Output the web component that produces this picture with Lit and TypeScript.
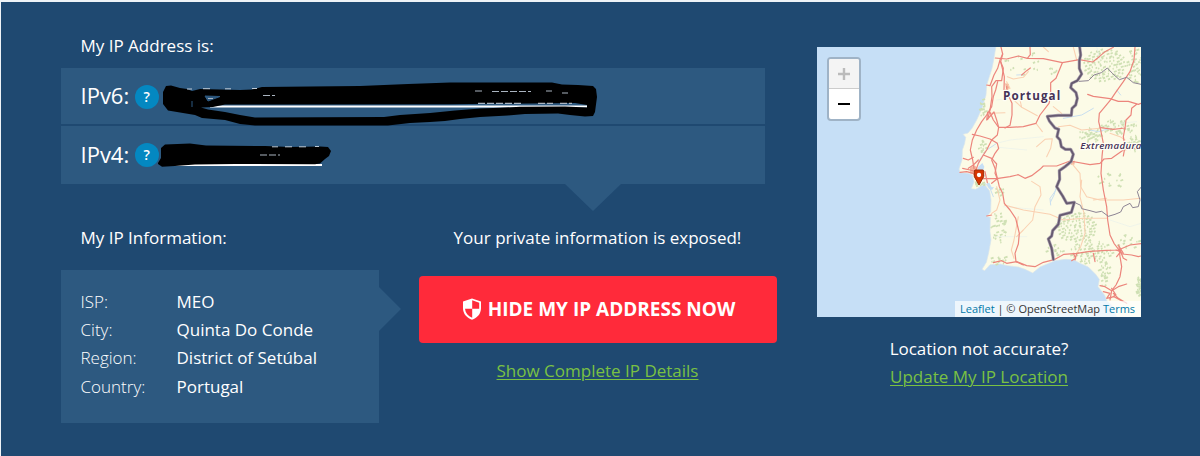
import { LitElement, html, css, svg } from "lit";
import { customElement } from "lit/decorators.js";

const MAJOR_ROADS = [
  "M573 21 L578 42 L572 65 L577 85 L583 110 L582 150",
  "M556 54 L590 57 L625 48 L652 55 L700 56 L757 68 L808 59 L848 66 L868 50 L885 35 L910 22",
  "M660 21 L661 44 L652 55",
  "M578 42 L570 60 L563 85 L552 105 L540 137 L530 135",
  "M572 65 L580 85 L575 122 L558 122 L545 140 L546 170 L540 210 L533 238",
  "M563 125 L557 150 L550 170 L545 200 L530 225 L515 245 L500 270 L487 300 L481 330 L488 360 L492 385",
  "M757 68 L746 95 L738 115 L722 128 L722 170 L717 190 L690 225 L678 250 L640 260 L600 262 L566 262 L550 240 L540 217",
  "M590 140 L592 160 L606 190 L606 225 L600 256 L585 264",
  "M533 217 L530 240 L552 216 L560 240 L566 262 L562 285 L545 300 L530 330 L520 345 L505 370 L498 390",
  "M487 283 L510 288 L540 297 L562 310 L566 325 L555 340 L545 360 L555 385 L562 415 L568 440 L578 460 L583 490 L600 510 L617 535 L622 555 L628 580 L625 612 L615 640 L618 665 L640 675",
  "M520 345 L545 355 L560 372 L555 400 L562 416",
  "M460 355 L475 360 L490 352 M458 385 L480 390 L500 395 L510 405 L520 416 L560 416 L600 410 L625 404 L645 415 L665 407 L690 388 L700 378 L740 378 L780 363 L840 374 L870 370 L882 357 L905 355 L940 330 L975 325 L992 318",
  "M450 397 L470 395 L490 400 L500 420 M475 385 L490 375 L505 360 M525 395 L532 428 M562 416 L545 430",
  "M975 21 L972 60 L960 95 L940 125 L915 160 L903 178 L885 200 L868 220 L866 245 L872 270 L880 310 L876 350 L873 400 L880 450 L890 500 L893 540 L900 585 L912 610 L927 630",
  "M833 163 L850 169 L900 176 L925 184 L955 184 L985 193 L993 190",
  "M872 263 L910 268 L945 264 L948 240 L963 225 L965 205 L980 193",
  "M945 264 L940 290 L945 320 L940 348",
  "M550 668 L575 662 L590 670 L620 665 L650 677 L675 680 L700 667 L735 658 L762 643 L800 640 L840 634 L890 631 L925 630 L960 615 L993 611",
  "M925 630 L937 642 L965 645 L985 650 L993 648 M927 620 L930 650 L935 680 L930 710 L918 735 L905 752 L900 780",
  "M930 630 L940 655 L950 660 M918 630 L932 635 L920 650 M925 615 L940 640",
  "M870 737 L885 740 L905 752 L925 740 L950 732 M880 755 L900 760 L890 775 L912 770 L940 785 M905 745 L918 765 L900 775 M910 760 L925 775 L950 790",
  "M790 640 L797 655 L785 662 M800 640 L795 660 M850 640 L855 665",
  "M530 528 L545 525 M635 105 L650 92 L661 84",
];

const MINOR_ROADS = [
  "M592 110 L610 117 L640 112 L655 95 M590 125 L600 145 L580 150",
  "M606 175 L635 202 L660 215 L682 227 M635 202 L630 180 M678 250 L697 275",
  "M680 320 L705 298 L727 296 L722 325 L710 350 M540 220 L585 218",
  "M730 200 L755 220 M665 424 L690 440 L693 465 L675 500 L668 540 L640 570 L620 590",
  "M583 495 L640 510 L720 523 L760 540 L820 535 L890 535",
  "M790 21 L800 60 M700 21 L715 35",
  "M745 260 L780 256 L815 270 L870 265 M785 370 L810 400 L812 440 L830 470 L870 480 L940 480 L992 475",
  "M815 420 L810 470 L822 520 L825 580 L812 620 L800 640",
  "M900 280 L930 290 L945 300 M850 480 L890 475 M560 440 L570 480 L560 510 L545 520",
  "M625 530 L612 600 L604 630 L612 655",
];

const RIVERS = [
  "M722 485 L732 465 L738 445 M738 450 L720 475 L722 495 M760 235 L815 225 L850 205",
  "M505 365 L530 330 L560 310 M525 430 L540 445 L550 470",
  "M840 270 L865 275 L900 265 M920 150 L932 165 M620 105 L640 104",
];

/** Faint streams that barely show over the land. */
const STREAMS = [
  "M560 310 L600 300 L700 290 M580 500 L640 505 L700 510 M545 320 L650 330 M560 180 L700 160",
  "M860 20 L870 60 M930 250 L980 245 M560 590 L650 590 M900 540 L960 560 L993 550",
];

/** Patches of woodland as [x, y, spread x, spread y, number of tufts]. */
const WOODS: number[][] = [
  [880, 75, 65, 50, 105], [970, 75, 24, 55, 36], [515, 205, 9, 28, 16],
  [840, 285, 38, 24, 30], [920, 260, 58, 22, 42], [795, 560, 62, 45, 90],
  [840, 635, 65, 36, 65], [565, 560, 24, 48, 30], [565, 455, 15, 15, 10],
  [515, 320, 13, 20, 12], [725, 90, 12, 12, 5], [900, 420, 45, 24, 14],
  [985, 740, 10, 30, 28], [880, 690, 18, 25, 17], [505, 431, 15, 7, 10],
  [730, 630, 28, 18, 15], [565, 660, 30, 14, 12], [950, 605, 35, 22, 14],
  [640, 70, 60, 34, 14], [970, 310, 22, 26, 25], [880, 720, 12, 20, 8],
];

/** Low-discrepancy scatter, so the woodland keeps the same shape on every render. */
function tufts(): string {
  let d = "";
  let n = 1;
  for (const [cx, cy, rx, ry, count] of WOODS) {
    for (let i = 0; i < count; i++, n++) {
      const a = ((n * 0.5698403) % 1) * Math.PI * 2;
      const r = Math.sqrt((n * 0.7548777) % 1);
      const x = cx + Math.cos(a) * r * rx;
      const y = cy + Math.sin(a) * r * ry;
      const w = 3 + (n % 4) * 1.8;
      d += `M${x.toFixed(1)} ${y.toFixed(1)}l${w} -3l2 5l-${w} 3z`;
    }
  }
  return d;
}

@customElement("ip-map")
export class IpMap extends LitElement {
  static styles = css`
    :host {
      display: grid;
      width: 324px;
      height: 270px;
      overflow: hidden;
      position: relative;
      background: #c6dff6;
      text-align: left;
    }
    .tiles { display: block; width: 324px; height: 270px; }
    .sea { fill: #c6dff6; }
    .land { fill: #fcfbe7; stroke: #d9e6ec; stroke-width: 2; }
    .woods { fill: #cfe0b4; }
    .city { fill: #f4b79d; }
    .line { fill: none; stroke-linejoin: round; stroke-linecap: round; }
    .river { stroke: #c9dff0; stroke-width: 3; }
    .stream { stroke: #edf3ea; stroke-width: 2.5; }
    .minor { stroke: #fad1b2; stroke-width: 3.2; }
    .major { stroke: #ec857c; stroke-width: 3.6; }
    .region { stroke: #8d8494; stroke-width: 3; }
    .border-halo { stroke: #aaa0ae; stroke-width: 9.5; }
    .border { stroke: #665a70; stroke-width: 5.5; }
    .label {
      font-family: "Open Sans", sans-serif;
      font-weight: 700;
      fill: #453257;
      stroke: #fffef5;
      stroke-width: 7;
      stroke-linejoin: round;
      paint-order: stroke;
    }
    .country { font-size: 35px; letter-spacing: 3.2px; }
    .area { font-size: 29px; font-style: italic; font-weight: 600; letter-spacing: 1px; }
    .pin { fill: #d63400; stroke: #9e2c07; stroke-width: 3; }
    .eye { fill: #fff; }
    .zoom {
      position: absolute;
      left: 10px;
      top: 10px;
      width: 30px;
      border: 2px solid #9fb3c6;
      border-radius: 4px;
      background: #fff;
      overflow: hidden;
    }
    .step { display: grid; place-items: center; box-sizing: border-box; height: 30px; }
    .step.off { background: #f4f4f4; border-bottom: 1px solid #ccc; }
    .step svg { display: block; }
    .credit {
      position: absolute;
      right: 0;
      bottom: 0;
      box-sizing: border-box;
      width: 186px;
      height: 16px;
      padding-left: 5px;
      background: rgba(255, 255, 255, 0.7);
      color: #333;
      font: 11px/16px "Open Sans", sans-serif;
      white-space: nowrap;
    }
    .credit a { color: #0078a8; }
  `;

  render() {
    const paths = (list: string[], cls: string) =>
      list.map((d) => svg`<path class="line ${cls}" d=${d} />`);
    const frontier =
      "M809 21 L812 45 L808 62 L808 85 L815 102 L802 122 L785 130 L782 143 L798 158 L802 175 L797 195 L786 205 L784 226 L745 226 L712 229 L718 243 L735 264 L746 268 L741 290 L750 300 L754 320 L766 328 L782 328 L790 343 L783 365 L765 380 L748 392 L749 418 L740 440 L758 468 L770 490 L793 487 L784 517 L750 526 L745 553 L728 572 L725 588 L715 597 L725 625 L730 658";
    return html`
      <svg class="tiles" viewBox="21 21 972 810">
        <rect class="sea" x="21" y="21" width="972" height="810" />
        <path class="land" d="M558 18 L550 65 L546 85 L530 135 L528 165 L516 205 L500 240 L486 265 L474 279 L459 283 L467 292 L464 310 L457 330 L456 360 L447 387 L450 398 L475 400 L487 405 L492 425 L484 446 L497 448 L523 433 L539 453 L543 480 L542 515 L530 530 L541 532 L540 575 L543 600 L536 638 L529 667 L516 688 L524 692 L540 674 L570 672 L592 677 L625 681 L645 688 L668 699 L690 681 L735 662 L765 658 L790 659 L810 670 L835 681 L857 703 L868 718 L864 740 L884 766 L891 784 L905 795 L920 831 L996 834 L996 18 Z" />
        <path class="woods" d=${tufts()} />
        <path class="sea" d="M500 398 L505 380 L517 369 L523 380 L518 397 L526 408 L513 407 Z M530 430 L538 428 L545 442 L552 441 L546 450 L536 445 Z" />
        <path class="city" d="M480 383 l14 -7 l8 8 l-4 22 l-18 -6 z M585 130 l12 2 l0 15 l-8 4 z M782 364 l13 -2 l-2 12 l-10 0 z" />
        ${paths(STREAMS, "stream")} ${paths(RIVERS, "river")}
        ${paths(MINOR_ROADS, "minor")} ${paths(MAJOR_ROADS, "major")}
        <path class="line region" d="M808 124 L835 122 L852 105 L874 98 L892 84 L908 101 L928 119 L950 112 L970 128 L993 133" />
        <path class="line region" d="M793 487 L812 496 L815 506 L840 512 L858 517 L875 514 L895 529 L915 523 L932 516 L940 500 L960 490 L968 503 L985 500 L990 480 L982 455 L993 442" />
        <path class="line border-halo" d=${frontier} />
        <path class="line border" d=${frontier} />
        <text class="label country" x="579" y="179">Portugal</text>
        <text class="label area" x="811" y="328">Extremadura</text>
        <path class="pin" d="M493 393 Q493 390 496 390 H518 Q521 390 521 393 V410 L507 435 L493 410 Z" />
        <circle class="eye" cx="507" cy="405" r="6.5" />
      </svg>
      <div class="zoom">
        <div class="step off">
          <svg width="14" height="14"><path d="M7 1V13M1 7H13" stroke="#bbb" stroke-width="2.4" /></svg>
        </div>
        <div class="step">
          <svg width="14" height="14"><path d="M1 7H13" stroke="#000" stroke-width="2" /></svg>
        </div>
      </div>
      <div class="credit"><a>Leaflet</a> | © OpenStreetMap <a>Terms</a></div>
    `;
  }
}

@customElement("app-root")
export class AppRoot extends LitElement {
  static styles = css`
    :host {
      display: block;
      box-sizing: border-box;
      height: 456px;
      padding: 2px 0 0 1px;
      background: #eef3f7;
      color: #fff;
      font: 17px/28px "Open Sans", sans-serif;
    }
    .banner {
      position: relative;
      display: flex;
      gap: 40px;
      box-sizing: border-box;
      height: 454px;
      padding: 0 0 0 60px;
      background: #1f4971;
      white-space: nowrap;
    }
    .main { width: 716px; padding-top: 30px; }
    .title { padding-left: 19.5px; }
    .addresses {
      position: relative;
      display: grid;
      grid-template-rows: 56px 58px;
      gap: 2px;
      width: 704px;
      margin-top: 8px;
    }
    .address {
      display: flex;
      align-items: center;
      gap: 6px;
      padding: 0 0 2px 19.5px;
      background: #2d5980;
      font-size: 22px;
    }
    .address + .address { padding-bottom: 3px; }
    .help {
      display: grid;
      place-items: center;
      width: 24px;
      height: 24px;
      margin: 3px 0 0 -0.5px;
      border-radius: 50%;
      background: #0488c1;
      font-size: 14px;
      line-height: 22px;
      font-weight: 600;
    }
    .down {
      position: absolute;
      left: 504px;
      top: 116px;
      width: 56px;
      height: 27px;
      background: #2d5980;
      clip-path: polygon(0 0, 100% 0, 50% 100%);
    }
    .columns { display: flex; gap: 40px; margin-top: 40px; }
    .info { width: 318px; }
    .facts {
      position: relative;
      display: grid;
      grid-template-columns: 96px 1fr;
      grid-auto-rows: 28.2px;
      align-content: start;
      box-sizing: border-box;
      height: 153px;
      margin-top: 18px;
      padding: 18px 20px 0 19.5px;
      background: #2d5980;
    }
    .name { font-weight: 300; }
    .right {
      position: absolute;
      left: 318px;
      top: 17px;
      width: 22px;
      height: 44px;
      background: #2d5980;
      clip-path: polygon(0 0, 100% 50%, 0 100%);
    }
    .action { width: 357px; padding-right: 1px; text-align: center; }
    .button {
      display: flex;
      align-items: center;
      justify-content: center;
      gap: 6px;
      box-sizing: border-box;
      width: 358px;
      height: 67px;
      margin: 24px 0 14px;
      padding: 0 0 2px 1px;
      border-radius: 4px;
      background: #ff2a3a;
      font-size: 19px;
      font-weight: 700;
    }
    .shield { display: block; }
    .link { color: #7ac143; text-decoration: underline; text-underline-offset: 2px; text-decoration-thickness: 1px; }
    .place { width: 324px; padding-top: 45px; text-align: center; }
    .note { margin-top: 18px; }
    .ink { position: absolute; left: -1px; top: -2px; }
  `;

  private facts = [
    ["ISP:", "MEO"],
    ["City:", "Quinta Do Conde"],
    ["Region:", "District of Setúbal"],
    ["Country:", "Portugal"],
  ];

  render() {
    return html`
      <div class="banner">
        <div class="main">
          <div class="title">My IP Address is:</div>
          <div class="addresses">
            <div class="address"><span>IPv6:</span><span class="help">?</span></div>
            <div class="address"><span>IPv4:</span><span class="help">?</span></div>
            <div class="down"></div>
          </div>
          <div class="columns">
            <div class="info">
              <div class="title">My IP Information:</div>
              <div class="facts">
                ${this.facts.map(([k, v]) => html`<span class="name">${k}</span><span>${v}</span>`)}
                <div class="right"></div>
              </div>
            </div>
            <div class="action">
              <div>Your private information is exposed!</div>
              <div class="button">
                <svg class="shield" width="20" height="22" viewBox="0 0 20 22">
                  <path d="M10 0.5 L19 3.5 V10 C19 16 15 20 10 21.7 C5 20 1 16 1 10 V3.5 Z" fill="#fff" />
                  <path d="M10.2 2.2 L17.2 4.7 V10.8 H10.2 Z M3 10.8 H10.2 V19.8 C6 18 3.4 15 3 10.8 Z" fill="#ff2a3a" />
                </svg>
                <span>HIDE MY IP ADDRESS NOW</span>
              </div>
              <a class="link">Show Complete IP Details</a>
            </div>
          </div>
        </div>
        <div class="place">
          <ip-map></ip-map>
          <div class="note">Location not accurate?</div>
          <a class="link">Update My IP Location</a>
        </div>
        <svg class="ink" width="620" height="180">
          <path d="M210 106.5H590" stroke="#fff" stroke-width="2" />
          <path d="M173 165H322" stroke="#fff" stroke-width="2" />
          <path fill-rule="evenodd" d="M163 92 L166 86 L171 85.5 L180 88 L187 89 L192 91 L200 89 L240 90 L252 89.5 L262 87 L310 86.5 L360 86 L408 84 L450 82.5 L552 82.5 L562 84.5 L578 85 L593 86 L596 89 L597 97 L595 112 L593 116 L585 116.5 L570 115 L558 113.5 L525 114 L508 115.5 L480 117 L460 119 L445 121 L430 122 L410 123 L388 125.5 L255 125.5 L240 124 L225 120 L202 118 L195 115 L180 112.5 L168 110.5 L163 104 Z
            M201 107.5 L213 107 L225 104.5 L450 104.2 L575 103 L587 105 L587 107.5 L565 106.5 L520 106.8 L500 107.8 L480 108.5 L455 110.5 L430 113 L400 115 L384 117 L255 117.5 L240 115 L225 112 L208 109.5 Z" />
          <path d="M158 163 L161 158 L161 148 L165 144.5 L190 143.5 L206 145.5 L265 146 L290 147 L320 146.5 L328 147 L331 151 L329 156 L325 159 L320 163.5 L315 164.3 L235 164 L195 164.5 L175 166 L162 166.7 L158 164 Z" />
          <path d="M205 96 L220 96.5 L208 101 Z M192 101 v6" stroke="#2d5980" fill="#2d5980" />
          <path d="M208 98.5H213 M263 95.5H275 M475 91H482 M492 91.5H531 M546 91H552 M562 93H568 M478 103.3H523 M538 103.3H553 M560 103.3H572 M260 155H280" fill="none" stroke="#aab4c0" stroke-width="1.2" stroke-dasharray="7 2" />
          <path d="M187 89H192 M203 88.7H210 M225 88.8H231 M252 88.5H257 M272 146.8H278 M285 146.8H292 M299 146.8H306 M315 146.5H319" stroke="#bfcbd6" />
        </svg>
      </div>
    `;
  }
}
